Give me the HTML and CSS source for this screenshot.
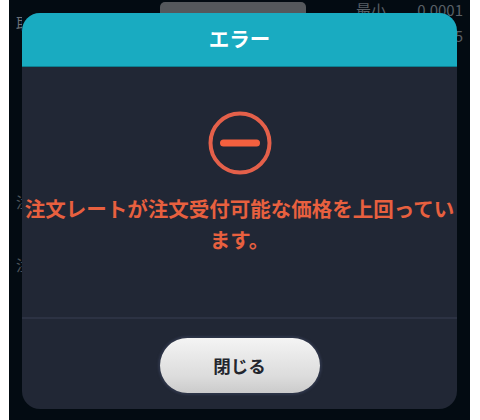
FILE: index.html
```html
<!DOCTYPE html>
<html lang="ja">
<head>
<meta charset="utf-8">
<title>エラー</title>
<link rel="stylesheet" href="styles.css">
</head>
<body>
<div class="screen">
  <div class="behind">
    <div class="top-row">
      <span class="bg-text first">取</span>
      <span class="tab"></span>
      <div class="stats">
        <div class="stat"><span>最小</span><span>0.0001</span></div>
        <div class="stat lower"><span></span><span>5</span></div>
      </div>
    </div>
    <div class="bg-text order one">注</div>
    <div class="bg-text order two">注</div>
  </div>
  <div class="modal" role="dialog">
    <header class="modal-head">エラー</header>
    <div class="modal-body">
      <svg class="icon" viewBox="0 0 64 64" width="64" height="64" aria-hidden="true">
        <circle cx="32" cy="32" r="29.5" fill="none" stroke="#e4604a" stroke-width="4"/>
        <line x1="15.5" y1="32" x2="48.5" y2="32" stroke="#f4603f" stroke-width="7" stroke-linecap="round"/>
      </svg>
      <p class="message">注文レートが注文受付可能な価格を上回っています。</p>
    </div>
    <div class="modal-foot">
      <button class="close" type="button">閉じる</button>
    </div>
  </div>
</div>
</body>
</html>
```
FILE: styles.css
```css
* { box-sizing: border-box; }
html, body { margin: 0; padding: 0; background: #fff; }
body { width: 480px; height: 420px; overflow: hidden; font-family: "Noto Sans CJK JP", "Noto Sans", sans-serif; }
.screen { position: relative; width: 461px; height: 420px; margin-left: 9px; background: #030b12; overflow: hidden; }
.behind { display: flex; flex-direction: column; padding-left: 7px; color: #6d7278; }
.top-row { display: flex; align-items: flex-start; }
.bg-text { font-size: 15px; line-height: 20px; width: 6px; overflow: hidden; }
.first { margin-top: 13px; flex: none; }
.tab { width: 146px; height: 16px; margin: 2px 0 0 138px; background: #55585c; border-radius: 5px 5px 0 0; }
.stats { margin-left: 50px; width: 107px; font-size: 15px; line-height: 18px; color: #596067; padding-top: 1px; }
.stat { display: flex; justify-content: space-between; }
.stat.lower { margin-top: 8px; }
.order.one { margin-top: 147px; color: #4d5359; }
.order.two { margin-top: 43px; color: #4d5359; }
.modal { position: absolute; left: 13px; top: 13px; width: 435px; height: 396px; background: #212735; border-radius: 18px; overflow: hidden; display: flex; flex-direction: column; }
.modal-head { height: 54px; flex: none; background: #19abc1; border-bottom: 1px solid #0d7f91; color: #fff; font-size: 20.5px; font-weight: 700; line-height: 50px; text-align: center; }
.modal-body { flex: 1; display: flex; flex-direction: column; align-items: center; padding-top: 44px; }
.icon { display: block; flex: none; }
.message { margin: 18px 0 0; width: 432px; color: #e8603f; font-size: 20.5px; font-weight: 700; line-height: 31px; text-align: center; }
.modal-foot { flex: none; height: 92px; border-top: 2px solid #2c3243; display: flex; justify-content: center; padding-top: 19px; }
.close { width: 160px; height: 55px; border: 0; box-shadow: 0 0 2px 2px #2e3549; border-radius: 28px; background: linear-gradient(#f4f4f4, #dcdcdc 70%, #cbcbcb); color: #23262e; font: 700 17.5px/1 "Noto Sans CJK JP", sans-serif; padding: 0; }
```
